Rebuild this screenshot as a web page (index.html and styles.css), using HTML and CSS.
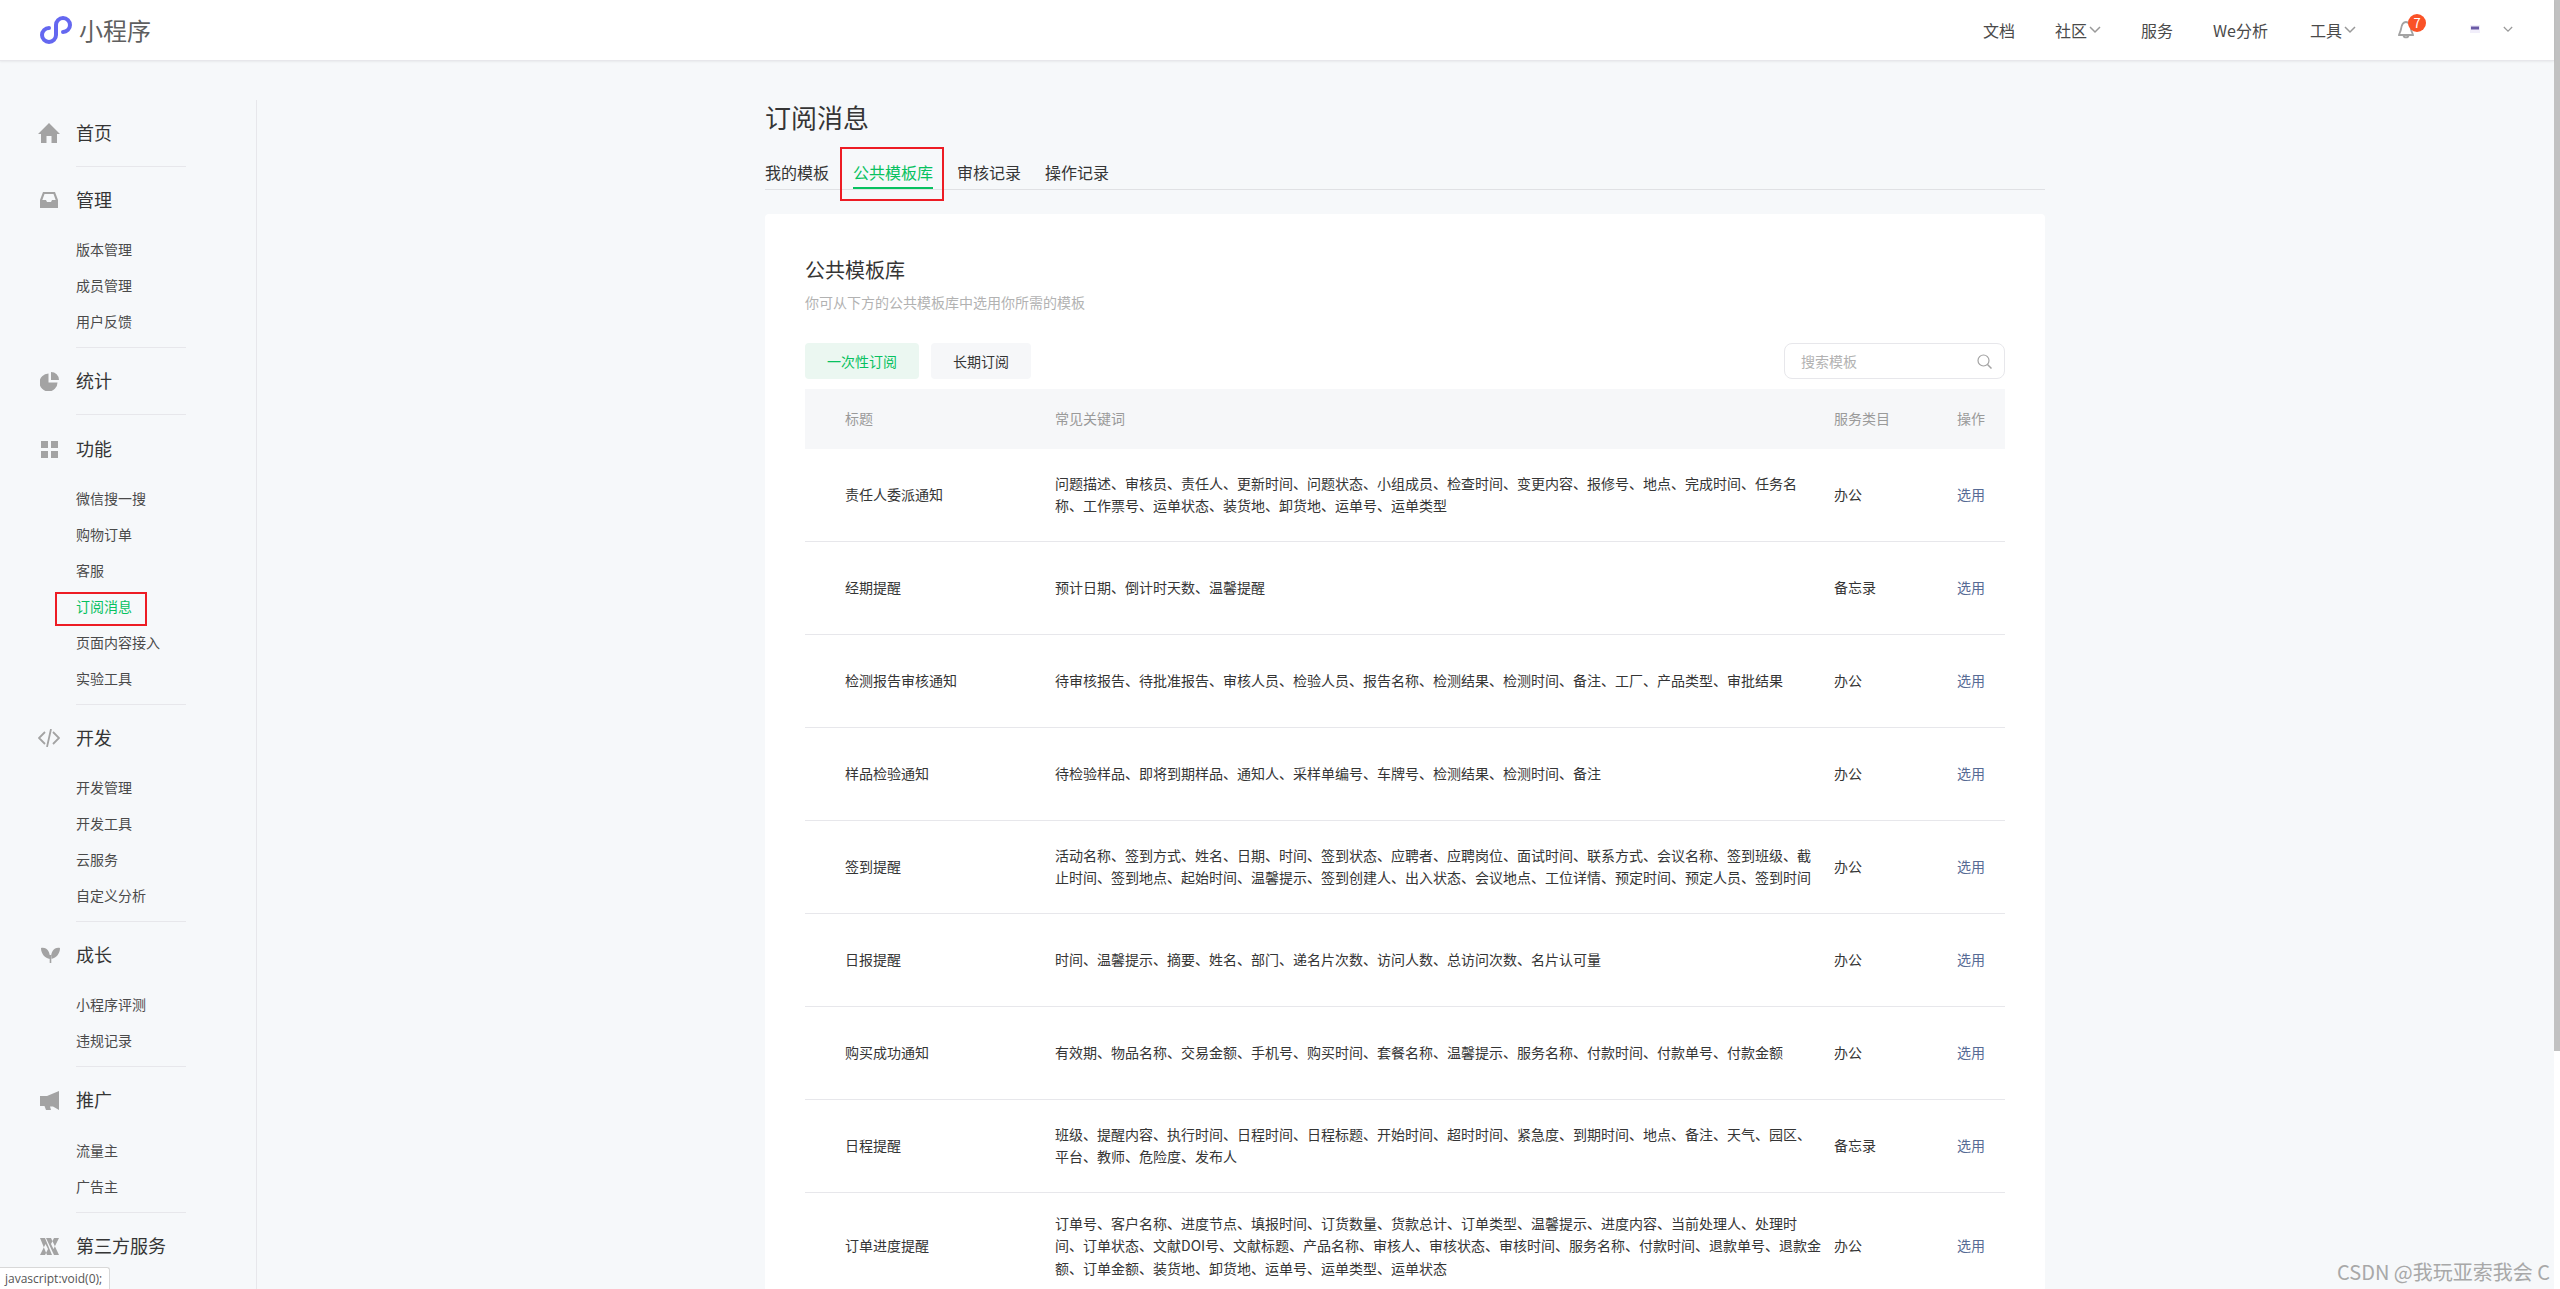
FILE: index.html
```html
<!DOCTYPE html>
<html lang="zh-CN">
<head>
<meta charset="utf-8">
<title>订阅消息</title>
<link rel="stylesheet" href="styles.css">
</head>
<body>
<div class="viewport">
  <div class="page">
    <header class="topbar">
      <a class="brand">
        <svg class="brand-logo" viewBox="0 0 32 28"><path d="M9 12a7 7 0 1 0 7 7V9a7 7 0 1 1 7 7" fill="none" stroke="#6467f0" stroke-width="4" stroke-linecap="round"/></svg>
        <span class="brand-name">小程序</span>
      </a>
      <nav class="topnav">
        <a class="topnav-item">文档</a>
        <a class="topnav-item">社区<svg class="chev" viewBox="0 0 12 8"><path d="M1 1l5 5 5-5"/></svg></a>
        <a class="topnav-item">服务</a>
        <a class="topnav-item topnav-we">We分析</a>
        <a class="topnav-item">工具<svg class="chev" viewBox="0 0 12 8"><path d="M1 1l5 5 5-5"/></svg></a>
        <span class="bell">
          <svg class="bell-icon" viewBox="0 0 16 19"><path d="M8 2C4.500 2 3.500 5.500 3 9s-2 4.500-2 6h14c0-1.500-1.500-2.500-2-6S11.500 2 8 2zM5.500 15.500c.5 2.500 4.500 2.500 5 0" fill="none" stroke="#a3a3a3" stroke-width="1.800"/></svg>
          <span class="badge">7</span>
        </span>
        <span class="account">
          <svg class="avatar" viewBox="0 0 10 8"><rect width="10" height="8" fill="#f1eefa"/><rect x="1" y="1.500" width="8" height="3" fill="#6a5aa6"/></svg>
          <svg class="chev chev-account" viewBox="0 0 12 8"><path d="M1 1l5 5 5-5"/></svg>
        </span>
      </nav>
    </header>

    <div class="shell">
      <aside class="sidebar">
        <section class="nav-sec">
          <div class="nav-head"><span class="nav-icon"><svg class="i-home" viewBox="0 0 22 20"><path d="M11 0l11 11h-3v9h-5.500v-7h-5v7H3v-9H0z"/></svg></span>首页</div>
        </section>
        <section class="nav-sec">
          <div class="nav-head"><span class="nav-icon"><svg class="i-box" viewBox="0 0 18 16"><path fill-rule="evenodd" d="M3 0h12l3 8v8H0V8zM4.500 2L2.300 8H6l1 2h4l1-2h3.700l-2.200-6z"/></svg></span>管理</div>
          <ul class="nav-list">
            <li class="nav-item">版本管理</li>
            <li class="nav-item">成员管理</li>
            <li class="nav-item">用户反馈</li>
          </ul>
        </section>
        <section class="nav-sec nav-sec-single">
          <div class="nav-head"><span class="nav-icon"><svg class="i-pie" viewBox="0 0 19 19"><path d="M8.500 1.500v9h9a9 9 0 1 1-9-9zM11 0a8 8 0 0 1 8 8h-8z"/></svg></span>统计</div>
        </section>
        <section class="nav-sec">
          <div class="nav-head"><span class="nav-icon"><svg class="i-grid" viewBox="0 0 17 17"><path d="M0 0h7v7H0zM10 0h7v7h-7zM0 10h7v7H0zM10 10h7v7h-7z"/></svg></span>功能</div>
          <ul class="nav-list">
            <li class="nav-item">微信搜一搜</li>
            <li class="nav-item">购物订单</li>
            <li class="nav-item">客服</li>
            <li class="nav-item nav-item-active"><span class="marked-side">订阅消息</span></li>
            <li class="nav-item">页面内容接入</li>
            <li class="nav-item">实验工具</li>
          </ul>
        </section>
        <section class="nav-sec">
          <div class="nav-head"><span class="nav-icon"><svg class="i-code" viewBox="0 0 22 18"><path d="M7 3L1 9l6 6M15 3l6 6-6 6M13 0L9 18" fill="none" stroke="#a3a3a3" stroke-width="1.800"/></svg></span>开发</div>
          <ul class="nav-list">
            <li class="nav-item">开发管理</li>
            <li class="nav-item">开发工具</li>
            <li class="nav-item">云服务</li>
            <li class="nav-item">自定义分析</li>
          </ul>
        </section>
        <section class="nav-sec">
          <div class="nav-head"><span class="nav-icon"><svg class="i-leaf" viewBox="0 0 19 16"><path d="M0 1c6-1 9 3 9 11C4 11 0 7 0 1zM19 1c-6-1-9 3-9 11 5-1 9-5 9-11zM8.700 8h1.600v8H8.700z"/></svg></span>成长</div>
          <ul class="nav-list">
            <li class="nav-item">小程序评测</li>
            <li class="nav-item">违规记录</li>
          </ul>
        </section>
        <section class="nav-sec">
          <div class="nav-head"><span class="nav-icon"><svg class="i-horn" viewBox="0 0 19 19"><path d="M0 5h7l12-5v19l-6-3.500h-3l1 3.500H6l-1.500-4H0z"/></svg></span>推广</div>
          <ul class="nav-list nav-list-late">
            <li class="nav-item">流量主</li>
            <li class="nav-item">广告主</li>
          </ul>
        </section>
        <section class="nav-sec">
          <div class="nav-head"><span class="nav-icon"><svg class="i-third" viewBox="0 0 19 17"><path d="M0 0h5l7 17H7zM6 0h5l8 17h-5zM19 0h-5l-3 6 2.500 5zM0 17h5l3-6-2.500-5z"/></svg></span>第三方服务</div>
        </section>
      </aside>

      <main class="main">
        <div class="content">
          <h1 class="page-title">订阅消息</h1>
          <div class="tabs">
            <a class="tab">我的模板</a>
            <a class="tab tab-active">公共模板库</a>
            <a class="tab">审核记录</a>
            <a class="tab">操作记录</a>
          </div>
          <section class="card">
            <h2 class="card-title">公共模板库</h2>
            <p class="card-desc">你可从下方的公共模板库中选用你所需的模板</p>
            <div class="filter">
              <a class="pill pill-active">一次性订阅</a>
              <a class="pill">长期订阅</a>
              <div class="search">
                <span class="search-ph">搜索模板</span>
                <svg class="search-icon" viewBox="0 0 15 15"><circle cx="6.500" cy="6.500" r="5.500" fill="none" stroke="#a3a3a3" stroke-width="1.200"/><path d="M10.500 10.500l4 4" stroke="#a3a3a3" stroke-width="1.500"/></svg>
              </div>
            </div>
            <table class="tpl">
              <colgroup><col class="c1"><col class="c2"><col class="c3"><col class="c4"></colgroup>
              <thead>
                <tr><th>标题</th><th>常见关键词</th><th>服务类目</th><th>操作</th></tr>
              </thead>
              <tbody>
                <tr><td>责任人委派通知</td><td>问题描述、审核员、责任人、更新时间、问题状态、小组成员、检查时间、变更内容、报修号、地点、完成时间、任务名称、工作票号、运单状态、装货地、卸货地、运单号、运单类型</td><td>办公</td><td><a class="pick">选用</a></td></tr>
                <tr><td>经期提醒</td><td>预计日期、倒计时天数、温馨提醒</td><td>备忘录</td><td><a class="pick">选用</a></td></tr>
                <tr><td>检测报告审核通知</td><td>待审核报告、待批准报告、审核人员、检验人员、报告名称、检测结果、检测时间、备注、工厂、产品类型、审批结果</td><td>办公</td><td><a class="pick">选用</a></td></tr>
                <tr><td>样品检验通知</td><td>待检验样品、即将到期样品、通知人、采样单编号、车牌号、检测结果、检测时间、备注</td><td>办公</td><td><a class="pick">选用</a></td></tr>
                <tr><td>签到提醒</td><td>活动名称、签到方式、姓名、日期、时间、签到状态、应聘者、应聘岗位、面试时间、联系方式、会议名称、签到班级、截止时间、签到地点、起始时间、温馨提示、签到创建人、出入状态、会议地点、工位详情、预定时间、预定人员、签到时间</td><td>办公</td><td><a class="pick">选用</a></td></tr>
                <tr><td>日报提醒</td><td>时间、温馨提示、摘要、姓名、部门、递名片次数、访问人数、总访问次数、名片认可量</td><td>办公</td><td><a class="pick">选用</a></td></tr>
                <tr><td>购买成功通知</td><td>有效期、物品名称、交易金额、手机号、购买时间、套餐名称、温馨提示、服务名称、付款时间、付款单号、付款金额</td><td>办公</td><td><a class="pick">选用</a></td></tr>
                <tr><td>日程提醒</td><td>班级、提醒内容、执行时间、日程时间、日程标题、开始时间、超时时间、紧急度、到期时间、地点、备注、天气、园区、平台、教师、危险度、发布人</td><td>备忘录</td><td><a class="pick">选用</a></td></tr>
                <tr><td>订单进度提醒</td><td>订单号、客户名称、进度节点、填报时间、订货数量、货款总计、订单类型、温馨提示、进度内容、当前处理人、处理时间、订单状态、文献DOI号、文献标题、产品名称、审核人、审核状态、审核时间、服务名称、付款时间、退款单号、退款金额、订单金额、装货地、卸货地、运单号、运单类型、运单状态</td><td>办公</td><td><a class="pick">选用</a></td></tr>
              </tbody>
            </table>
          </section>
        </div>
      </main>
    </div>
  </div>
  <div class="scrollbar"><div class="scrollbar-thumb"></div></div>
  <div class="statusbar">javascript:void(0);</div>
  <div class="watermark">CSDN @我玩亚索我会 C</div>
</div>
</body>
</html>
```
FILE: styles.css
```css
*, *::before, *::after { box-sizing: border-box; }
html, body { margin: 0; padding: 0; height: 100%; overflow: hidden; }
body {
  font-family: "Noto Sans CJK SC", "Liberation Sans", sans-serif;
  font-size: 14px;
  color: #353535;
  background: #f6f8fa;
}
a { color: inherit; text-decoration: none; }
ul { list-style: none; margin: 0; padding: 0; }
h1, h2, p { margin: 0; font-weight: 400; }

.viewport { position: relative; display: flex; width: 2560px; height: 1289px; overflow: hidden; }
.page { flex: 1; min-width: 0; display: flex; flex-direction: column; }
.scrollbar { width: 6px; background: #fff; }
.scrollbar-thumb { height: 1051px; background: #c1c1c1; }

/* top bar */
.topbar {
  flex: none;
  height: 61px;
  display: flex;
  align-items: center;
  justify-content: space-between;
  padding: 0 41px 1px 40px;
  background: #fff;
  border-bottom: 1px solid #e7e7eb;
  box-shadow: 0 1px 2px rgba(0, 0, 0, .06);
  position: relative;
}
.brand { display: flex; align-items: center; gap: 7px; }
.brand-logo { width: 32px; height: 28px; display: block; }
.brand-name { font-size: 24px; line-height: 32px; color: #5f5f5f; }
.topnav { display: flex; align-items: center; gap: 40px; font-size: 16px; line-height: 24px; color: #4a4a4a; }
.topnav-item { display: flex; align-items: center; }
.topnav-we { min-width: 57px; }
.chev { width: 12px; height: 8px; margin-left: 2px; }
.chev path { fill: none; stroke: #999; stroke-width: 1.500; }
.bell { position: relative; width: 16px; height: 19px; margin-left: 2px; }
.bell-icon { display: block; width: 16px; height: 19px; }
.badge {
  position: absolute;
  left: 10px;
  top: -6px;
  width: 18px;
  height: 18px;
  border-radius: 50%;
  background: #fa5227;
  color: #fff;
  font-size: 13px;
  line-height: 18px;
  text-align: center;
}
.account { display: flex; align-items: center; gap: 23px; margin-left: 16px; }
.avatar { display: block; width: 10px; height: 8px; margin-top: -1px; }
.chev-account { width: 10px; height: 7px; margin: 0; }

/* layout */
.shell { flex: 1; min-height: 0; display: flex; }
.sidebar {
  flex: none;
  width: 257px;
  margin-top: 39px;
  padding-left: 38px;
  border-right: 1px solid #e7e7eb;
  overflow: hidden;
}
.nav-sec::after { content: ""; display: block; width: 110px; height: 1px; margin-left: 38px; background: #e7e7eb; }
.nav-sec:last-child::after { display: none; }
.nav-sec-single { padding-bottom: 1px; }
.nav-head { display: flex; align-items: center; height: 66px; padding-bottom: 2px; font-size: 18px; color: #353535; }
.nav-icon { flex: none; width: 38px; display: flex; align-items: center; }
.nav-icon svg { display: block; margin-top: 2px; fill: #a3a3a3; }
.i-home { width: 22px; height: 20px; }
.i-box { width: 18px; height: 16px; margin-left: 2px; }
.i-pie { width: 19px; height: 19px; margin-left: 2px; }
.i-grid { width: 17px; height: 17px; margin-left: 3px; }
.i-code { width: 22px; height: 18px; }
.i-leaf { width: 19px; height: 16px; margin-left: 3px; }
.i-horn { width: 19px; height: 19px; margin-left: 2px; }
.i-third { width: 19px; height: 17px; margin-left: 2px; }
.nav-list { margin-top: -2px; padding: 0 0 8px 38px; }
.nav-list-late { margin-top: -1px; padding-bottom: 8px; }
.nav-item { height: 36px; line-height: 36px; font-size: 14px; color: #4a4a4a; }
.nav-item-active { color: #07c160; }
.marked-side { position: relative; display: inline-block; }
.marked-side::after {
  content: "";
  position: absolute;
  left: -21px;
  top: 4px;
  width: 92px;
  height: 34px;
  border: 2px solid #ed1c24;
}

/* content */
.main { flex: 1; min-width: 0; padding: 39px 1px 0 0; overflow: hidden; }
.content { width: 1280px; margin: 0 auto; }
.page-title { font-size: 26px; line-height: 34px; margin-bottom: 26px; }
.tabs { display: flex; gap: 24px; border-bottom: 1px solid #e0e1e4; font-size: 16px; }
.tab { line-height: 24px; padding-bottom: 3px; border-bottom: 2px solid transparent; position: relative; }
.tab-active { color: #07c160; border-bottom-color: #07c160; }
.tab-active::after {
  content: "";
  position: absolute;
  left: -13px;
  top: -13px;
  width: 104px;
  height: 54px;
  border: 2px solid #ed1c24;
}
.card { margin-top: 24px; padding: 40px; background: #fff; border-radius: 4px; }
.card-title { font-size: 20px; line-height: 32px; }
.card-desc { margin-top: 5px; line-height: 22px; color: #b2b2b2; }
.filter { display: flex; align-items: center; gap: 12px; margin-top: 30px; }
.pill { height: 36px; line-height: 36px; padding: 0 22px; border-radius: 4px; background: #f6f7f9; }
.pill-active { background: #ebf7f1; color: #07c160; }
.search {
  margin-left: auto;
  width: 221px;
  height: 36px;
  display: flex;
  align-items: center;
  justify-content: space-between;
  padding: 0 12px 0 16px;
  border: 1px solid #e7e7eb;
  border-radius: 8px;
}
.search-ph { color: #b2b2b2; }
.search-icon { display: block; width: 15px; height: 15px; }

/* table */
.tpl { width: 1200px; margin-top: 10px; table-layout: fixed; border-collapse: separate; border-spacing: 0; }
.c1 { width: 250px; }
.c2 { width: 779px; }
.c3 { width: 123px; }
.c4 { width: 48px; }
.tpl th {
  height: 60px;
  padding: 0 0 2px;
  text-align: left;
  font-weight: 400;
  color: #9a9a9a;
  background: #f6f7f9;
}
.tpl td {
  height: 93px;
  padding: 19px 0 21px;
  line-height: 22.400px;
  vertical-align: middle;
  border-bottom: 1px solid #e7e7eb;
}
.tpl th:first-child, .tpl td:first-child { padding-left: 40px; }
.tpl th:nth-child(2), .tpl td:nth-child(2) { padding-right: 11px; }
.pick { color: #576b95; }

/* overlays */
.statusbar {
  position: absolute;
  left: 0;
  bottom: 0;
  height: 22px;
  padding: 0 7px 0 5px;
  font-family: "Open Sans", "Liberation Sans", sans-serif;
  font-size: 12px;
  line-height: 22px;
  color: #555;
  background: #fff;
  border: 1px solid #d8d8d8;
  border-width: 1px 1px 0 0;
  border-top-right-radius: 3px;
}
.watermark {
  position: absolute;
  right: 10px;
  bottom: 4px;
  font-size: 20px;
  line-height: 26px;
  color: #a8a8a8;
}
```
